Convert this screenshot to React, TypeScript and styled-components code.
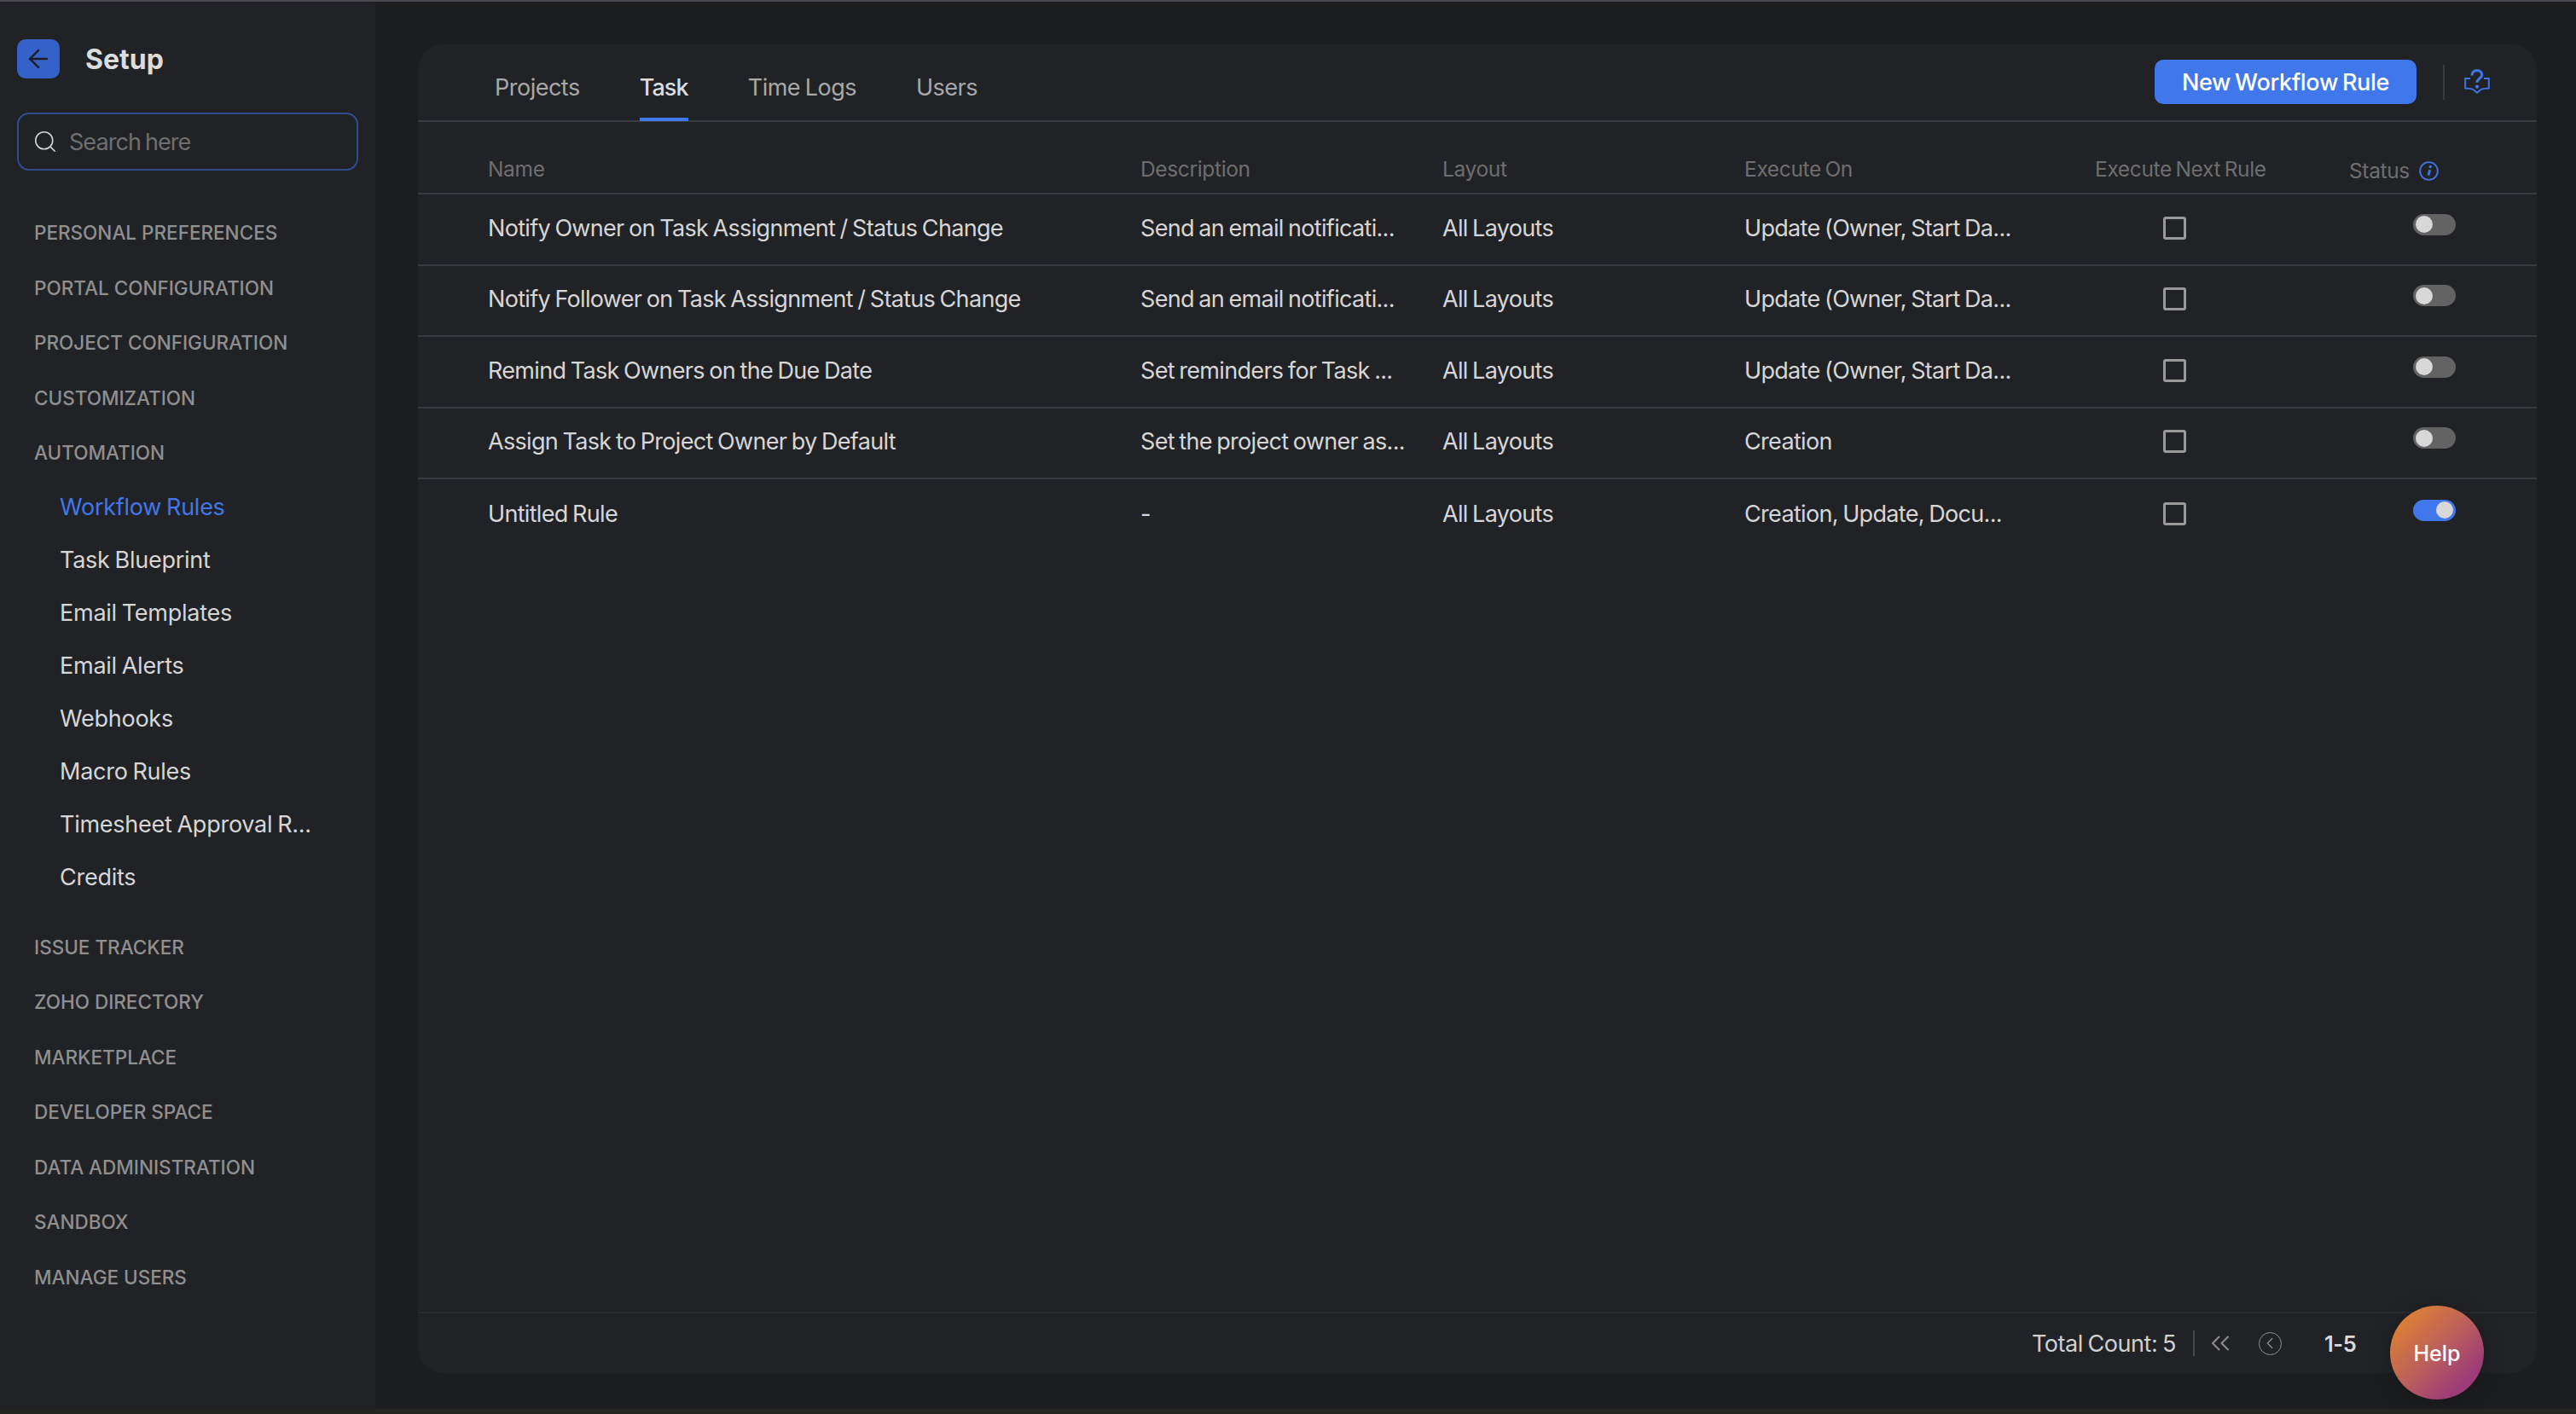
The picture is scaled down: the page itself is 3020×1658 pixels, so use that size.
import React from "react";
import styled, { createGlobalStyle } from "styled-components";
import { ArrowLeft, Search, ChevronsLeft, ChevronLeft } from "lucide-react";

const GlobalStyle = createGlobalStyle`
  html, body {
    margin: 0;
    padding: 0;
    background: #1c1d1f;
    font-family: Inter, "Noto Sans", sans-serif;
  }
  * {
    box-sizing: border-box;
  }
`;

const Shell = styled.div`
  position: relative;
  display: flex;
  height: 1658px;
  overflow: hidden;
  background: #1c1d1f;
  border-top: 2px solid #4a4750;
  border-bottom: 6px solid #242423;
`;

const Sidebar = styled.aside`
  width: 440px;
  flex-shrink: 0;
  background: #212226;
  padding: 44px 20px 0;
`;

const SideTop = styled.div`
  display: flex;
  align-items: center;
  gap: 30px;
`;

const BackButton = styled.button`
  width: 50px;
  height: 46px;
  border: 0;
  border-radius: 10px;
  background: #3562c8;
  color: #1d1e22;
  display: flex;
  align-items: center;
  justify-content: center;
  padding: 0;
`;

const Title = styled.div`
  font-size: 32px;
  font-weight: 700;
  color: #dcdcdc;
`;

const SearchBox = styled.div`
  margin-top: 40px;
  height: 68px;
  border: 2px solid #2e4e90;
  border-radius: 14px;
  display: flex;
  align-items: center;
  padding-left: 16px;
  gap: 13px;
  color: #d0d0d0;
  font-size: 27px;
  letter-spacing: -0.95px;
  word-spacing: -1.5px;

  span {
    color: #6f6f6f;
  }
`;

const SideList = styled.nav`
  margin-top: 41px;
  display: flex;
  flex-direction: column;
`;

const Section = styled.div<{ $gap?: boolean }>`
  height: 64.5px;
  line-height: 64.5px;
  padding-left: 20px;
  font-size: 22.5px;
  font-weight: 500;
  color: #8f8f8f;
  margin-top: ${(p) => (p.$gap ? "19px" : "0")};
`;

const SubItem = styled.div<{ $active?: boolean }>`
  height: 62px;
  line-height: 62px;
  padding-left: 50px;
  font-size: 27px;
  letter-spacing: -0.25px;
  word-spacing: -1.5px;
  color: ${(p) => (p.$active ? "#4077ea" : "#d6d6d6")};
`;

const Main = styled.main`
  flex: 1;
  padding: 50px 46px 42px 50px;
  display: flex;
`;

const Card = styled.section`
  flex: 1;
  background: #212226;
  border-radius: 30px;
  display: flex;
  flex-direction: column;
`;

const CardHead = styled.div`
  height: 91px;
  flex-shrink: 0;
  display: flex;
  align-items: flex-end;
  justify-content: space-between;
  border-bottom: 2px solid #3a3b40;
  padding: 0 55px 0 90px;
`;

const Tabs = styled.div`
  display: flex;
  gap: 70px;
`;

const Tab = styled.div<{ $active?: boolean }>`
  height: 66px;
  margin-bottom: -1px;
  line-height: 54px;
  font-size: 27px;
  letter-spacing: ${(p) => (p.$active ? "-0.9px" : "-0.5px")};
  word-spacing: -1.5px;
  color: ${(p) => (p.$active ? "#dcdcdc" : "#a8a8a8")};
  font-weight: ${(p) => (p.$active ? 500 : 400)};
  border-bottom: 4px solid ${(p) => (p.$active ? "#4077ea" : "transparent")};
`;

const HeadActions = styled.div`
  display: flex;
  align-items: center;
  align-self: flex-start;
  margin-top: 18px;
`;

const PrimaryButton = styled.button`
  width: 307px;
  height: 52px;
  border: 0;
  border-radius: 10px;
  background: #4077ea;
  color: #fff;
  font-family: inherit;
  font-size: 27px;
  font-weight: 500;
  letter-spacing: -0.3px;
  word-spacing: -2px;
  padding: 0;
`;

const VRule = styled.div`
  width: 2px;
  height: 41px;
  background: #3a3b40;
  margin: 0 23px 0 31px;
`;

const Row = styled.div`
  height: 83.5px;
  flex-shrink: 0;
  display: grid;
  grid-template-columns: 765px 354px 354px 411px 298px 1fr;
  align-items: center;
  padding-left: 82px;
  padding-bottom: 3px;
  border-bottom: 2px solid #38393e;
  font-size: 27px;
  letter-spacing: -0.68px;
  word-spacing: -1.5px;
  color: #d6d6d6;
`;

const HeadRow = styled(Row)`
  height: 85px;
  padding-top: 27px;
  padding-bottom: 0;
  font-size: 24.5px;
  letter-spacing: -0.35px;
  word-spacing: -2px;
  color: #6e6e6e;
`;

const RuleList = styled.div`
  display: flex;
  flex-direction: column;

  ${Row}:last-child {
    border-bottom: 0;
  }
`;

const StatusHead = styled.div`
  display: flex;
  align-items: center;
  gap: 11px;
  padding-top: 4px;
`;

const Check = styled.div`
  width: 27px;
  height: 27px;
  margin-left: 80px;
  border: 3px solid #9a9a9a;
  border-radius: 3px;
`;

const Toggle = styled.div<{ $on?: boolean }>`
  width: 50px;
  height: 25px;
  margin: 0 0 8px 75px;
  border-radius: 13px;
  background: ${(p) => (p.$on ? "#4077ea" : "#636363")};
  display: flex;
  align-items: center;
  justify-content: ${(p) => (p.$on ? "flex-end" : "flex-start")};
  padding: 0 3px;

  &::before {
    content: "";
    width: 20px;
    height: 20px;
    border-radius: 50%;
    background: #d8d8d8;
  }
`;

const Spacer = styled.div`
  flex: 1;
`;

const Footer = styled.footer`
  height: 72px;
  flex-shrink: 0;
  border-top: 2px solid #2a2b2f;
  display: flex;
  align-items: center;
  padding-left: 1892px;
  font-size: 27px;
  letter-spacing: -0.45px;
  word-spacing: -1.5px;
  color: #d0d0d0;
`;

const FooterRule = styled.div`
  width: 2px;
  height: 30px;
  background: #47484c;
  margin: 0 12px 0 20px;
`;

const Pager = styled.div`
  display: flex;
  align-items: center;
  color: #8f8f8f;
  gap: 27px;
`;

const CircleChevron = styled.div`
  width: 27px;
  height: 27px;
  border: 1.5px solid #8f8f8f;
  border-radius: 50%;
  display: flex;
  align-items: center;
  justify-content: center;
`;

const PageRange = styled.div`
  margin-left: 50px;
  font-size: 25.5px;
  font-weight: 600;
  color: #dadada;
`;

const HelpBubble = styled.div`
  position: absolute;
  left: 2802px;
  top: 1529px;
  width: 110px;
  height: 110px;
  padding-top: 2px;
  border-radius: 50%;
  background: linear-gradient(135deg, #e08430 8%, #bb5f5c 50%, #9c3b78 80%);
  color: #fff;
  font-size: 25px;
  font-weight: 500;
  display: flex;
  align-items: center;
  justify-content: center;
  box-shadow: 0 4px 24px rgba(0, 0, 0, 0.25);
`;

const BookIcon = () => (
  <svg width="30" height="30" viewBox="0 0 30 30" fill="none" stroke="#3f74e4">
    <path d="M7 11H1.2v11.4c4 0 7 .3 9.3 1.6L15 27.6l4.5-3.6c2.3-1.3 5.3-1.6 9.3-1.6V11H23" strokeWidth="2" />
    <path d="M9 7.6C9 3.8 11.4 1.6 14.8 1.6c3.4 0 5.9 2.2 5.9 5.2 0 4.2-5.7 4.4-5.7 8.9" strokeWidth="3.2" />
    <circle cx="15" cy="20.6" r="2.2" fill="#3f74e4" stroke="none" />
  </svg>
);

const InfoIcon = () => (
  <svg width="23" height="23" viewBox="0 0 24 24" fill="none">
    <circle cx="12" cy="12" r="10.8" stroke="#3f74e4" strokeWidth="2" />
    <path d="M13.2 10.5l-1.7 6.8" stroke="#3f74e4" strokeWidth="3" />
    <circle cx="13.8" cy="6.8" r="1.8" fill="#3f74e4" />
  </svg>
);

const sectionsTop = [
  "PERSONAL PREFERENCES",
  "PORTAL CONFIGURATION",
  "PROJECT CONFIGURATION",
  "CUSTOMIZATION",
  "AUTOMATION",
];
const subItems = [
  "Workflow Rules",
  "Task Blueprint",
  "Email Templates",
  "Email Alerts",
  "Webhooks",
  "Macro Rules",
  "Timesheet Approval R...",
  "Credits",
];
const sectionsBottom = [
  "ISSUE TRACKER",
  "ZOHO DIRECTORY",
  "MARKETPLACE",
  "DEVELOPER SPACE",
  "DATA ADMINISTRATION",
  "SANDBOX",
  "MANAGE USERS",
];

const rules = [
  ["Notify Owner on Task Assignment / Status Change", "Send an email notificati...", "Update (Owner, Start Da...", false],
  ["Notify Follower on Task Assignment / Status Change", "Send an email notificati...", "Update (Owner, Start Da...", false],
  ["Remind Task Owners on the Due Date", "Set reminders for Task ...", "Update (Owner, Start Da...", false],
  ["Assign Task to Project Owner by Default", "Set the project owner as...", "Creation", false],
  ["Untitled Rule", "-", "Creation, Update, Docu...", true],
] as const;

export default function App() {
  return (
    <>
      <GlobalStyle />
      <Shell>
        <Sidebar>
          <SideTop>
            <BackButton>
              <ArrowLeft size={34} strokeWidth={1.7} />
            </BackButton>
            <Title>Setup</Title>
          </SideTop>
          <SearchBox>
            <Search size={30} strokeWidth={1.3} />
            <span>Search here</span>
          </SearchBox>
          <SideList>
            {sectionsTop.map((s) => (
              <Section key={s}>{s}</Section>
            ))}
            {subItems.map((s, i) => (
              <SubItem key={s} $active={i === 0}>
                {s}
              </SubItem>
            ))}
            {sectionsBottom.map((s, i) => (
              <Section key={s} $gap={i === 0}>
                {s}
              </Section>
            ))}
          </SideList>
        </Sidebar>
        <Main>
          <Card>
            <CardHead>
              <Tabs>
                <Tab>Projects</Tab>
                <Tab $active>Task</Tab>
                <Tab>Time Logs</Tab>
                <Tab>Users</Tab>
              </Tabs>
              <HeadActions>
                <PrimaryButton>New Workflow Rule</PrimaryButton>
                <VRule />
                <BookIcon />
              </HeadActions>
            </CardHead>
            <HeadRow>
              <div>Name</div>
              <div>Description</div>
              <div>Layout</div>
              <div>Execute On</div>
              <div>Execute Next Rule</div>
              <StatusHead>
                Status <InfoIcon />
              </StatusHead>
            </HeadRow>
            <RuleList>
              {rules.map((r) => (
                <Row key={r[0]}>
                  <div>{r[0]}</div>
                  <div>{r[1]}</div>
                  <div>All Layouts</div>
                  <div>{r[2]}</div>
                  <Check />
                  <Toggle $on={r[3]} />
                </Row>
              ))}
            </RuleList>
            <Spacer />
            <Footer>
              Total Count: 5
              <FooterRule />
              <Pager>
                <ChevronsLeft size={36} strokeWidth={1.3} />
                <CircleChevron>
                  <ChevronLeft size={22} strokeWidth={1.4} />
                </CircleChevron>
              </Pager>
              <PageRange>1-5</PageRange>
            </Footer>
          </Card>
        </Main>
        <HelpBubble>Help</HelpBubble>
      </Shell>
    </>
  );
}
